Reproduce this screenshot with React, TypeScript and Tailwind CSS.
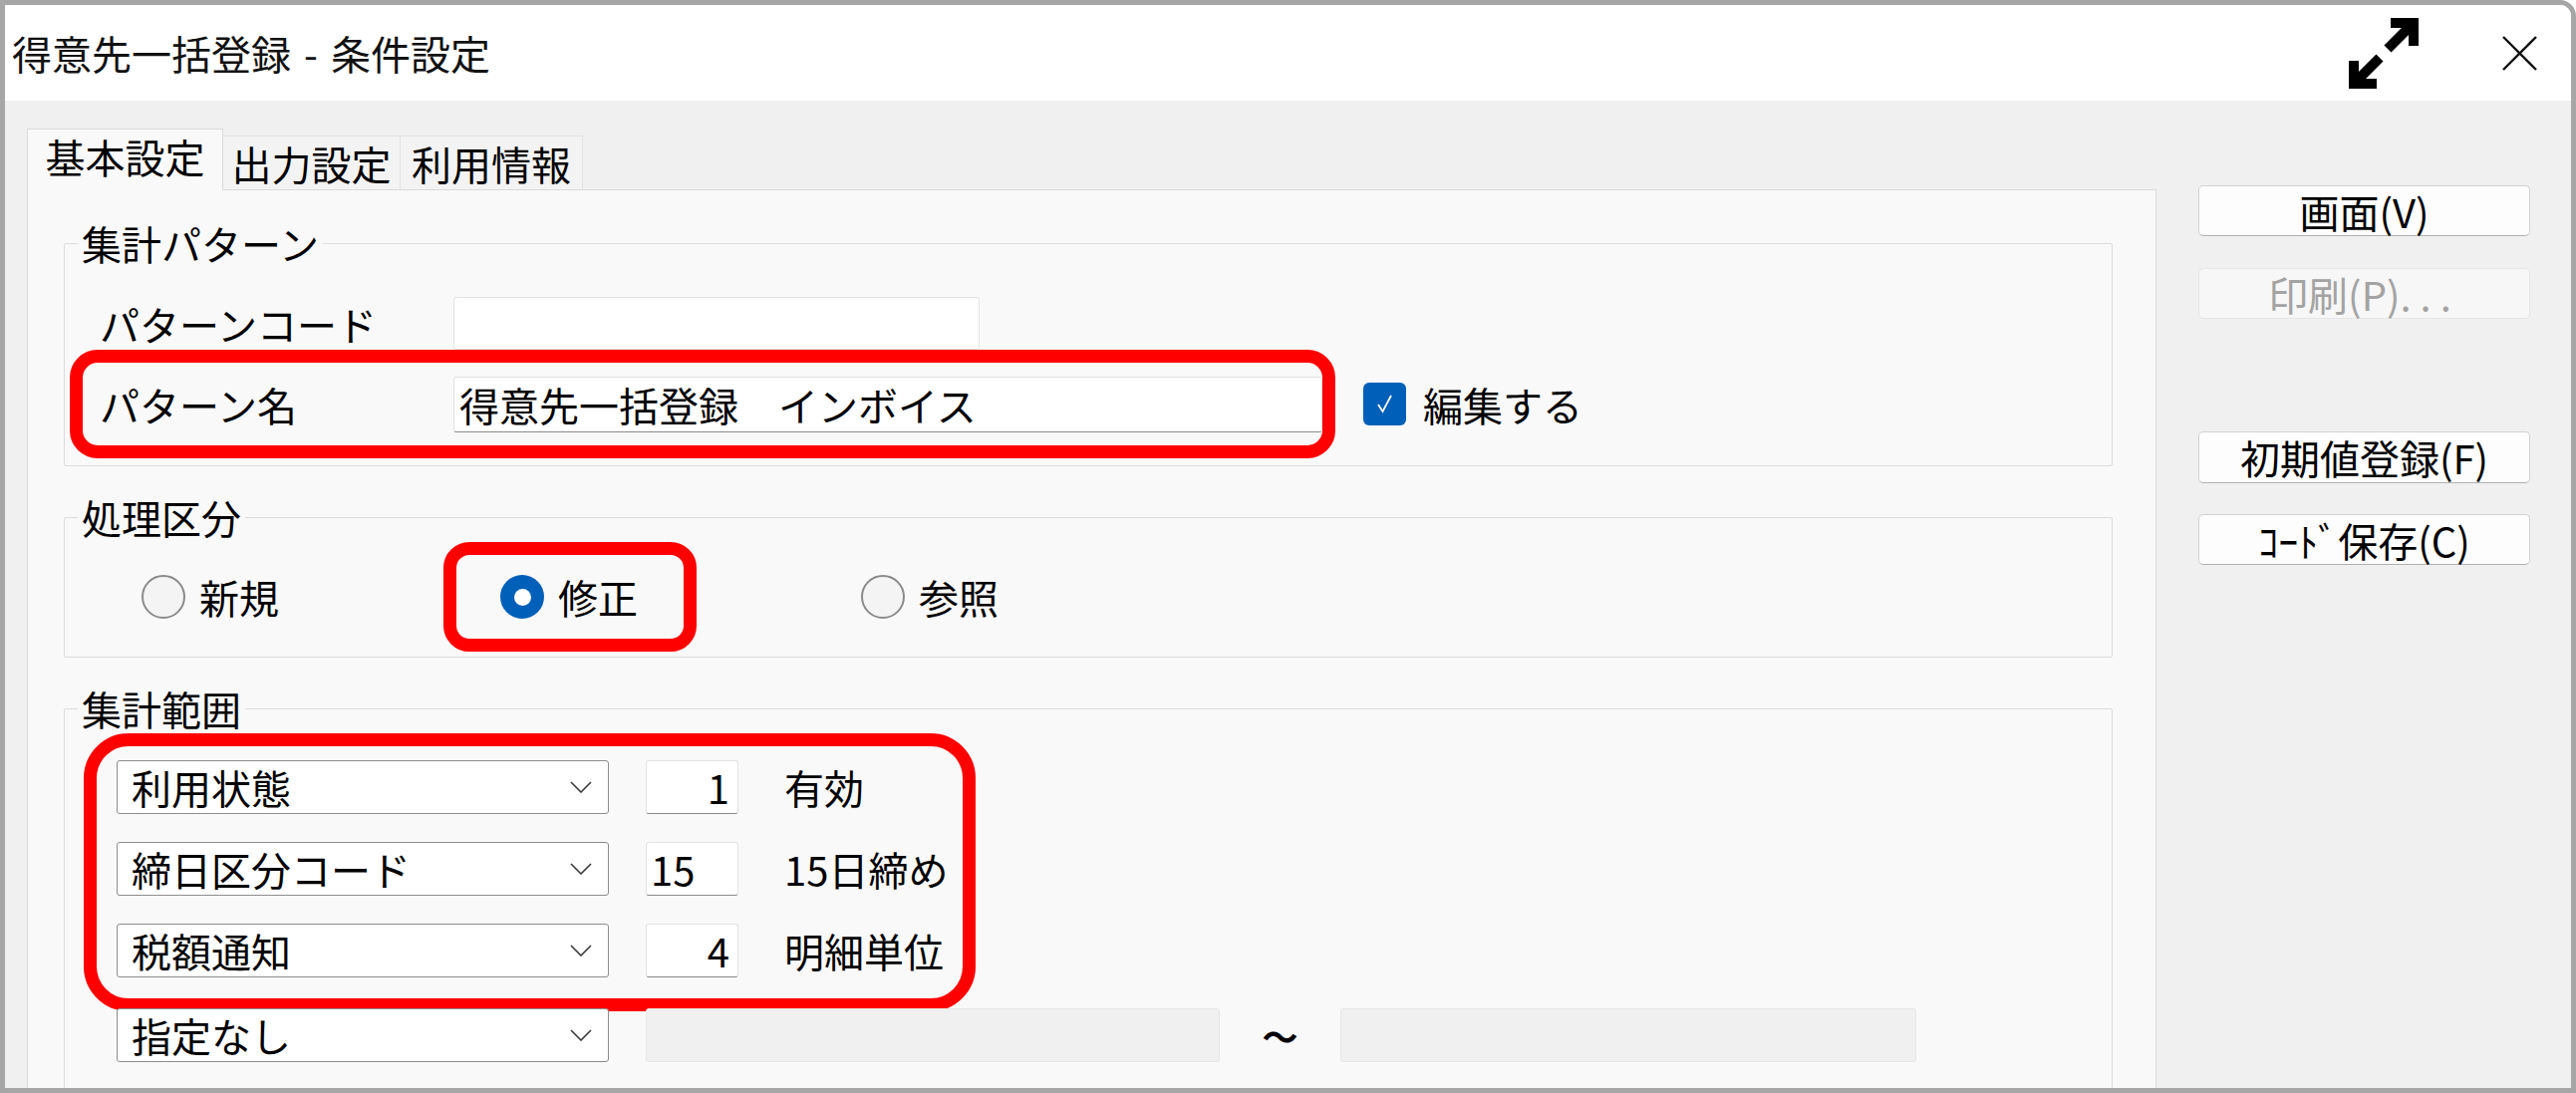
import React from 'react';

// ── Small controls ───────────────────────────────────────────────────────────

function Chevron() {
  return (
    <svg width="22" height="12" viewBox="0 0 22 12" className="shrink-0">
      <path d="M1 1 L11 11 L21 1" fill="none" stroke="#3a3a3a" strokeWidth="1.6" />
    </svg>
  );
}

function Select({ value }: { value: string }) {
  return (
    <div className="flex h-[54px] w-[494px] shrink-0 items-center justify-between rounded-[3px] border border-[#8d8d8d] bg-white pl-[14px] pr-[16px]">
      <span className="text-[40px] leading-[48px]">{value}</span>
      <Chevron />
    </div>
  );
}

function NumBox({ value, left }: { value: string; left?: boolean }) {
  return (
    <div
      className={
        left
          ? 'flex h-[54px] w-[93px] shrink-0 items-center justify-start rounded-[3px] border border-[#e3e3e3] border-b-[#8a8a8a] bg-white pl-[4px] text-[40px] leading-[48px]'
          : 'flex h-[54px] w-[93px] shrink-0 items-center justify-end rounded-[3px] border border-[#e3e3e3] border-b-[#8a8a8a] bg-white pr-[8px] text-[40px] leading-[48px]'
      }
    >
      {value}
    </div>
  );
}

function Radio({ label, checked }: { label: string; checked?: boolean }) {
  return (
    <div className="flex shrink-0 items-center gap-[14px]">
      {checked ? (
        <span className="flex h-[44px] w-[44px] items-center justify-center rounded-full bg-[#005fb8]">
          <span className="h-[17px] w-[17px] rounded-full bg-white" />
        </span>
      ) : (
        <span className="h-[44px] w-[44px] rounded-full border-[2px] border-[#8a8a8a] bg-[#f4f4f4]" />
      )}
      <span className="text-[40px] leading-[48px]">{label}</span>
    </div>
  );
}

function Group({ title, className, children }: { title: string; className?: string; children: React.ReactNode }) {
  return (
    <fieldset className={'min-w-0 rounded-[2px] border border-[#dcdcdc] ' + (className ?? '')}>
      <legend className="ml-[13px] px-[4px] text-[40px] leading-[48px]">{title}</legend>
      {children}
    </fieldset>
  );
}

function SideButton({ label, disabled, className }: { label: React.ReactNode; disabled?: boolean; className?: string }) {
  return (
    <div
      className={
        (disabled
          ? 'border-[#e6e6e6] bg-[#f7f7f7] text-[#a3a3a3] '
          : 'border-[#d3d3d3] border-b-[#b0b0b0] bg-[#fdfdfd] text-black ') +
        'flex h-[51px] w-[333px] items-center justify-center rounded-[5px] border text-[40px] leading-[48px] ' +
        (className ?? '')
      }
    >
      {label}
    </div>
  );
}

// ── Title bar ────────────────────────────────────────────────────────────────

function TitleBar() {
  return (
    <div className="flex h-[96px] shrink-0 items-center bg-white pl-[7px] pr-[34px]">
      <span className="text-[40px] leading-[48px] text-[#111]">
        得意先一括登録<span className="mx-[13px]">-</span>条件設定
      </span>
      <svg width="70" height="71" viewBox="0 0 70 71" className="ml-auto">
        <polyline points="42,5 65,5 65,28" fill="none" stroke="#000" strokeWidth="10" />
        <line x1="63" y1="7" x2="39" y2="31" stroke="#000" strokeWidth="10" />
        <line x1="31" y1="40" x2="7" y2="64" stroke="#000" strokeWidth="10" />
        <polyline points="5,43 5,66 28,66" fill="none" stroke="#000" strokeWidth="10" />
      </svg>
      <svg width="35" height="35" viewBox="0 0 35 35" className="ml-[84px]">
        <line x1="1" y1="1" x2="34" y2="34" stroke="#111" strokeWidth="2.4" />
        <line x1="34" y1="1" x2="1" y2="34" stroke="#111" strokeWidth="2.4" />
      </svg>
    </div>
  );
}

// ── Page ─────────────────────────────────────────────────────────────────────

export default function App() {
  return (
    <div className="h-[1097px] w-[2585px] overflow-hidden bg-white font-['Noto_Sans_CJK_JP','Noto_Sans',sans-serif] text-black">
      <div className="flex h-full flex-col overflow-hidden rounded-tr-[16px] border-[5px] border-[#a6a6a6] bg-[#f0f0f0]">
        <TitleBar />

        <div className="flex min-h-0 flex-1 overflow-hidden pl-[22px] pt-[28px]">
          {/* Tabs + panel */}
          <div className="flex w-[2137px] shrink-0 flex-col">
            <div className="flex items-end">
              <div className="relative z-10 -mb-px flex h-[62px] w-[197px] items-center justify-center border border-b-0 border-[#dadada] bg-[#f9f9f9] pb-[8px] text-[40px] leading-[48px]">
                基本設定
              </div>
              <div className="flex h-[54px] w-[178px] items-center justify-center border border-b-0 border-l-0 border-[#e2e2e2] bg-[#f3f3f3] text-[40px] leading-[48px]">
                出力設定
              </div>
              <div className="flex h-[54px] w-[183px] items-center justify-center border border-b-0 border-l-0 border-[#e2e2e2] bg-[#f3f3f3] text-[40px] leading-[48px]">
                利用情報
              </div>
            </div>

            <div className="h-[1000px] shrink-0 border border-[#dadada] bg-[#f9f9f9] pl-[36px] pr-[43px] pt-[29px]">
              {/* 集計パターン */}
              <Group title="集計パターン" className="pb-[7px]">
                <div className="mt-[30px] flex h-[53px] items-center pl-[35px]">
                  <span className="w-[355px] shrink-0 text-[40px] leading-[48px]">パターンコード</span>
                  <div className="h-[53px] w-[528px] rounded-[3px] border border-[#e3e3e3] bg-white" />
                </div>
                <div className="flex items-center">
                  <div className="ml-[5px] flex h-[109px] w-[1270px] shrink-0 items-center rounded-[28px] border-[13px] border-[#ff0000] pl-[17px]">
                    <span className="w-[355px] shrink-0 text-[40px] leading-[48px]">パターン名</span>
                    <div className="flex h-[56px] w-[872px] shrink-0 items-center rounded-[3px] border border-[#e3e3e3] border-b-[#8a8a8a] bg-white pl-[5px] text-[40px] leading-[48px]">
                      得意先一括登録　インボイス
                    </div>
                  </div>
                  <div className="ml-[28px] flex h-[43px] w-[43px] items-center justify-center rounded-[6px] bg-[#005fb8]">
                    <svg width="43" height="43" viewBox="0 0 43 43">
                      <path d="M15 22 L19.5 29 L28 13" fill="none" stroke="#fff" strokeWidth="1.8" />
                    </svg>
                  </div>
                  <span className="ml-[17px] text-[40px] leading-[48px]">編集する</span>
                </div>
              </Group>

              {/* 処理区分 */}
              <Group title="処理区分" className="mt-[27px] pb-[5px]">
                <div className="mt-px flex h-[110px] items-center pl-[77px]">
                  <Radio label="新規" />
                  <div className="ml-[165px] flex h-[110px] w-[254px] shrink-0 items-center rounded-[26px] border-[13px] border-[#ff0000] pl-[44px]">
                    <Radio label="修正" checked />
                  </div>
                  <div className="ml-[165px]">
                    <Radio label="参照" />
                  </div>
                </div>
              </Group>

              {/* 集計範囲 */}
              <Group title="集計範囲" className="mt-[27px] h-[600px]">
                <div className="ml-[19px] mt-px flex h-[279px] w-[895px] flex-col gap-[28px] rounded-[45px] border-[13px] border-[#ff0000] pl-[20px] pt-[14px]">
                  {[
                    { sel: '利用状態', num: '1', label: '有効' },
                    { sel: '締日区分コード', num: '15', label: '15日締め', left: true },
                    { sel: '税額通知', num: '4', label: '明細単位' },
                  ].map((r) => (
                    <div key={r.sel} className="flex items-center">
                      <Select value={r.sel} />
                      <div className="ml-[37px]">
                        <NumBox value={r.num} left={r.left} />
                      </div>
                      <span className="ml-[46px] text-[40px] leading-[48px]">{r.label}</span>
                    </div>
                  ))}
                </div>
                <div className="relative -mt-[3px] ml-[52px] flex items-center">
                  <Select value="指定なし" />
                  <div className="ml-[37px] h-[54px] w-[576px] rounded-[3px] border border-[#e6e6e6] bg-[#f0f0f0]" />
                  <span className="w-[121px] text-center text-[36px] font-bold leading-[48px]">～</span>
                  <div className="h-[54px] w-[578px] rounded-[3px] border border-[#e6e6e6] bg-[#f0f0f0]" />
                </div>
              </Group>
            </div>
          </div>

          {/* Side buttons */}
          <div className="ml-[42px] mt-[57px] flex w-[333px] shrink-0 flex-col">
            <SideButton label="画面(V)" />
            <SideButton
              label={
                <>
                  印刷(P)<span className="tracking-[9px]">...</span>
                </>
              }
              disabled
              className="mt-[32px]"
            />
            <SideButton label="初期値登録(F)" className="mt-[113px] h-[52px]" />
            <SideButton label="ｺｰﾄﾞ保存(C)" className="mt-[31px]" />
          </div>
        </div>
      </div>
    </div>
  );
}
